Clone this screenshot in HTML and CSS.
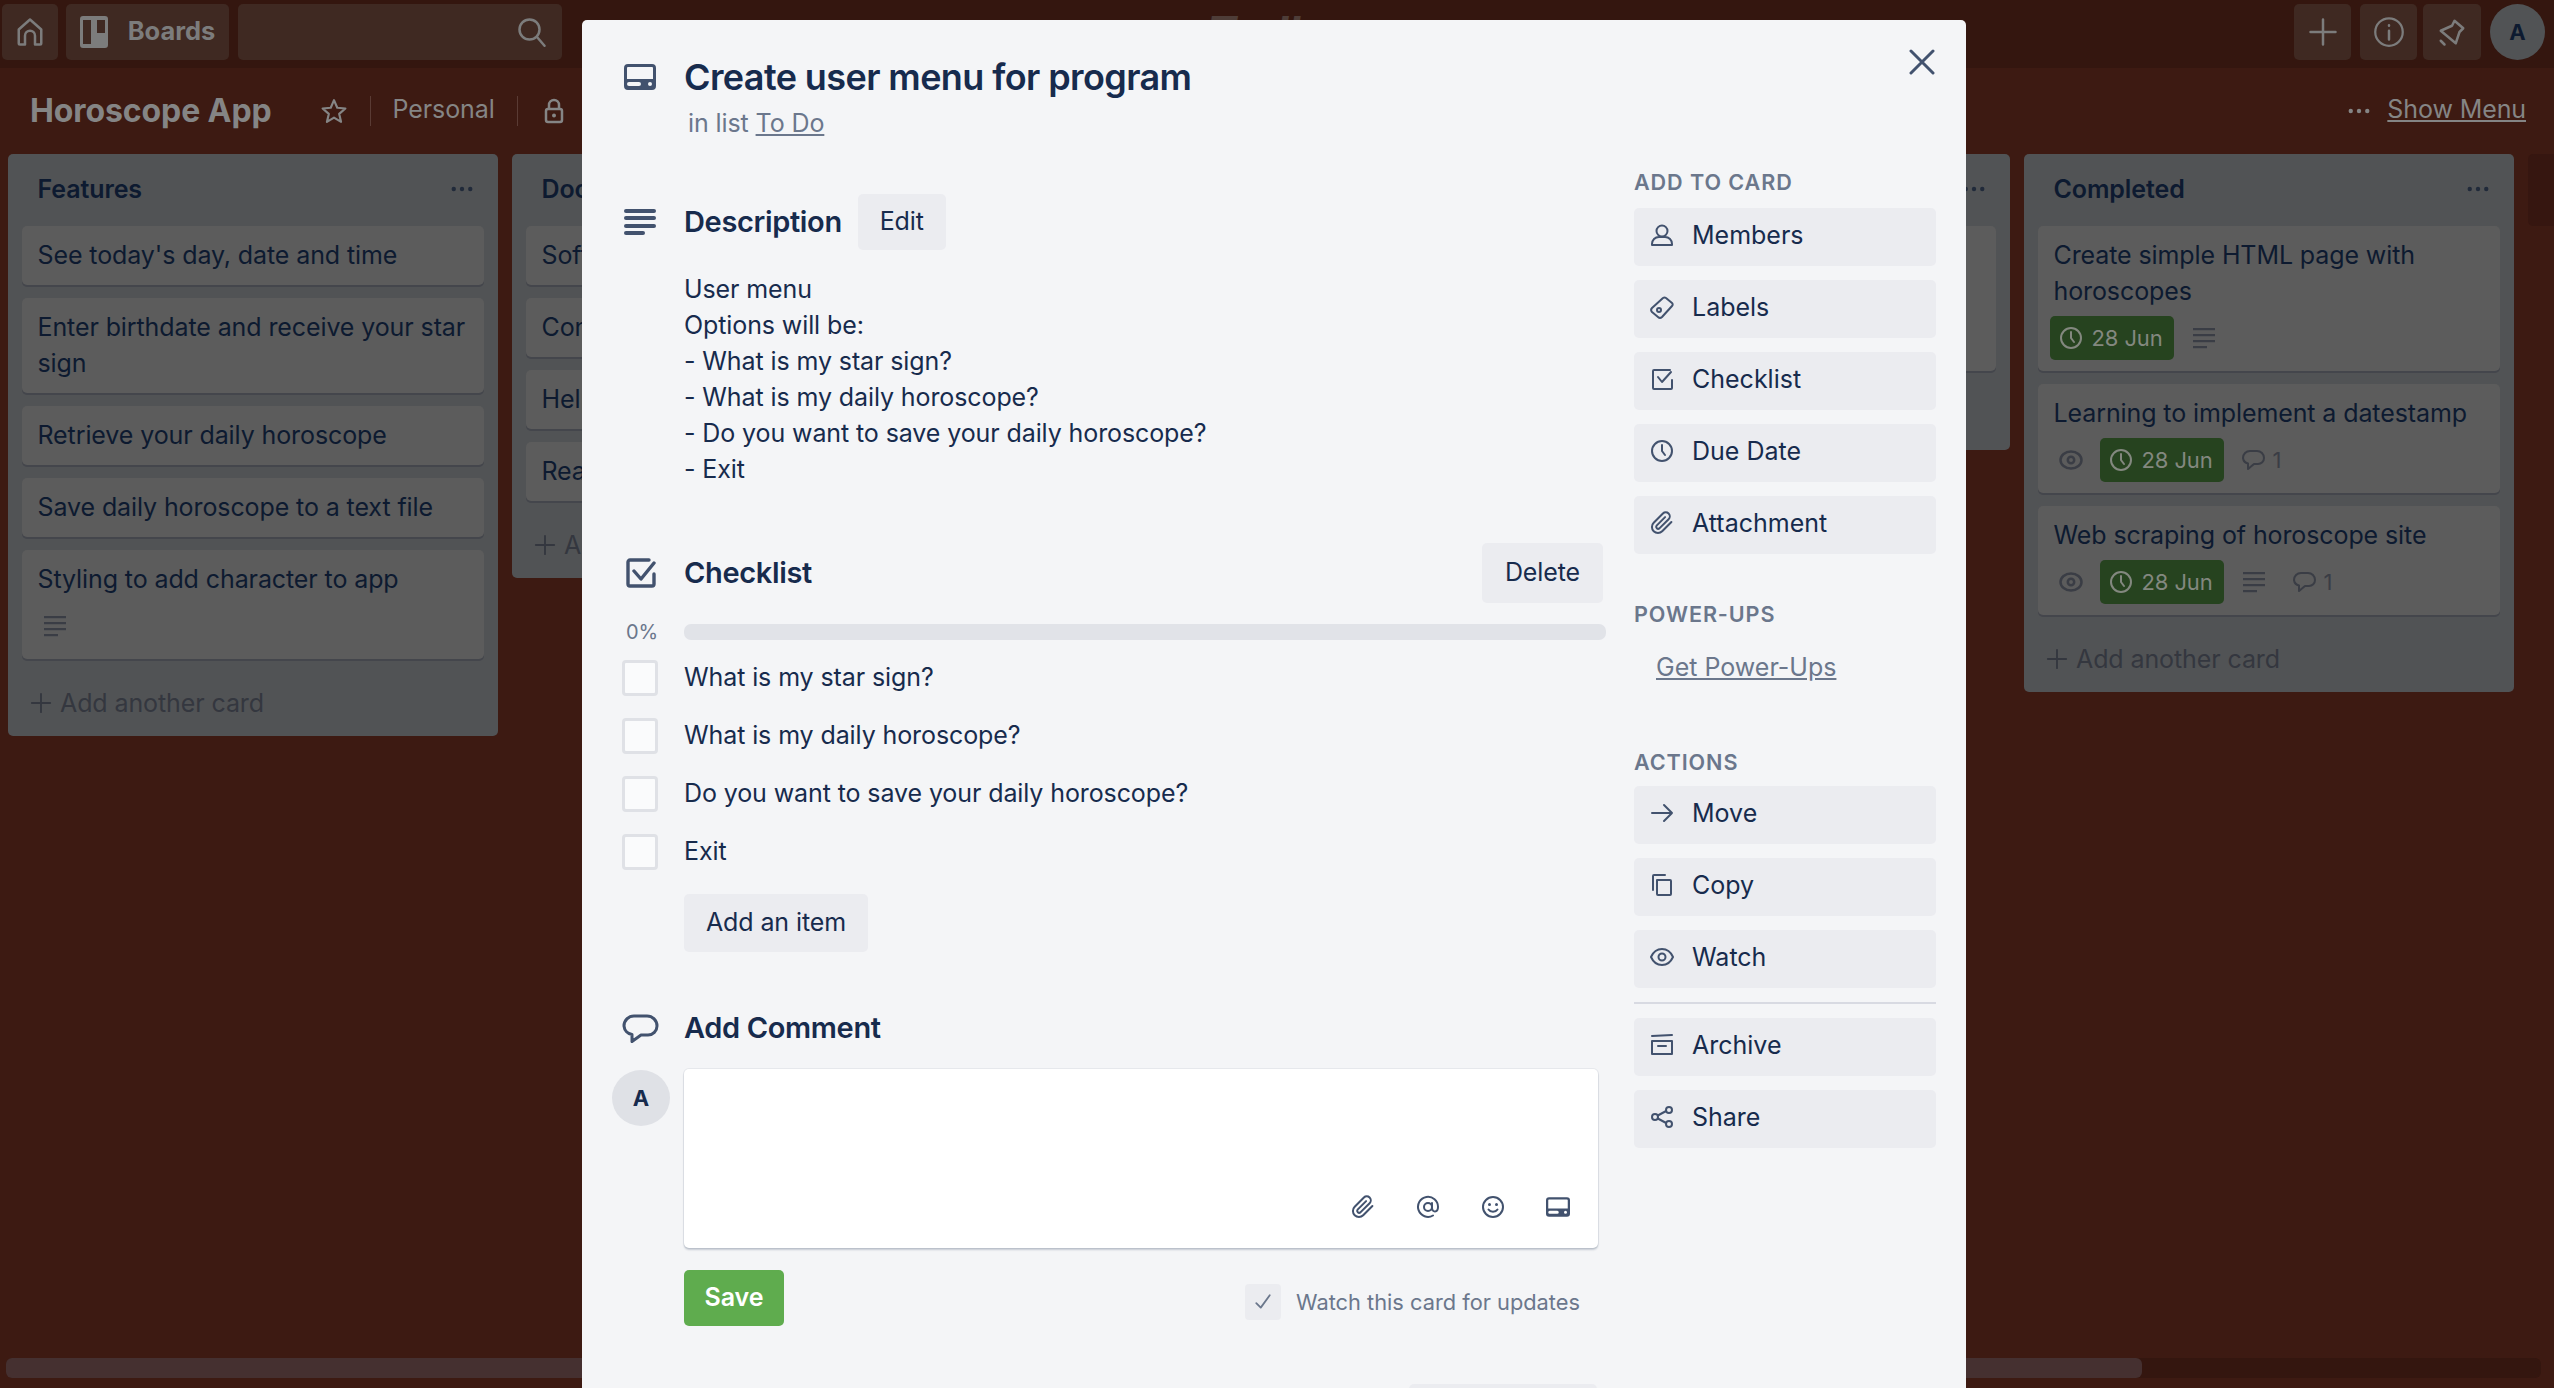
FILE: index.html
```html
<!DOCTYPE html>
<html lang="en">
<head>
    <meta charset="utf-8">
    <title>Create user menu for program | Horoscope App</title>
    <link rel="stylesheet" href="styles.css">
</head>
<body>
    <svg class="sprite" xmlns="http://www.w3.org/2000/svg">
        <symbol id="i-card" viewBox="0 0 32 26"><path fill-rule="evenodd" d="M4 0h24a4 4 0 0 1 4 4v18a4 4 0 0 1-4 4H4a4 4 0 0 1-4-4V4a4 4 0 0 1 4-4zm0 3a1 1 0 0 0-1 1v11h26V4a1 1 0 0 0-1-1zm1 15a1.500 1.500 0 0 0 0 4h10a1.500 1.500 0 0 0 0-4zm21 0a2 2 0 1 0 0 4 2 2 0 0 0 0-4z"/></symbol>
        <symbol id="i-desc" viewBox="0 0 32 26"><rect y="0" width="32" height="4" rx="2"/><rect y="7" width="32" height="4" rx="2"/><rect y="15" width="32" height="4" rx="2"/><rect y="22" width="21" height="4" rx="2"/></symbol>
        <symbol id="i-check" viewBox="0 0 30 30"><path fill="none" stroke="currentColor" stroke-width="3.400" stroke-linecap="round" stroke-linejoin="round" d="M23 2H4a2 2 0 0 0-2 2v22a2 2 0 0 0 2 2h22a2 2 0 0 0 2-2V16"/><path fill="none" stroke="currentColor" stroke-width="3.400" stroke-linecap="round" stroke-linejoin="round" d="M8 13l7 8L28 5"/></symbol>
        <symbol id="i-bubble" viewBox="0 0 24 24"><path fill="none" stroke="currentColor" stroke-width="2" stroke-linejoin="round" d="M9 3h7a7 7 0 0 1 7 7 6 6 0 0 1-6 6h-4l-6 5v-5.500A6.500 6.500 0 0 1 2 10a7 7 0 0 1 7-7z"/></symbol>
        <symbol id="i-bubble-wide" viewBox="0 0 37 29"><path fill="none" stroke="currentColor" stroke-width="3" stroke-linejoin="round" d="M12 2h13a10 10 0 0 1 10 10 9 9 0 0 1-9 9h-7l-9 6.500V20.500A9.500 9.500 0 0 1 2 12 10 10 0 0 1 12 2z"/></symbol>
        <symbol id="i-clock" viewBox="0 0 24 24"><circle cx="12" cy="12" r="10" fill="none" stroke="currentColor" stroke-width="2"/><path fill="none" stroke="currentColor" stroke-width="2" stroke-linecap="round" d="M12 6v6l3 4"/></symbol>
        <symbol id="i-eye" viewBox="0 0 24 24"><path fill="none" stroke="currentColor" stroke-width="2" d="M12 4c5 0 9 3.500 11 8-2 4.500-6 8-11 8S3 16.500 1 12c2-4.500 6-8 11-8z"/><circle cx="12" cy="12" r="3.500" fill="none" stroke="currentColor" stroke-width="2"/></symbol>
        <symbol id="i-eye-oval" viewBox="0 0 24 24"><ellipse cx="12" cy="12" rx="10.500" ry="8.500" fill="none" stroke="currentColor" stroke-width="2.500"/><circle cx="12" cy="12" r="3.200" fill="none" stroke="currentColor" stroke-width="2.500"/></symbol>
        <symbol id="i-lines" viewBox="0 0 24 24"><rect x="1" y="2" width="22" height="2.200"/><rect x="1" y="8" width="22" height="2.200"/><rect x="1" y="14" width="22" height="2.200"/><rect x="1" y="20" width="14" height="2.200"/></symbol>
        <symbol id="i-member" viewBox="0 0 24 24"><circle cx="12" cy="8" r="5.500" fill="none" stroke="currentColor" stroke-width="2"/><path fill="none" stroke="currentColor" stroke-width="2" stroke-linejoin="round" d="M2 22v-1c0-4 3-7 7-7h6c4 0 7 3 7 7v1z"/></symbol>
        <symbol id="i-label" viewBox="0 0 24 24"><path fill="none" stroke="currentColor" stroke-width="2" stroke-linejoin="round" d="M2 13L13 3a3 3 0 0 1 3 0l6 5a2 2 0 0 1 0 3L12 22a3 3 0 0 1-4 0l-6-5a3 3 0 0 1 0-4z"/><circle cx="9" cy="15" r="2" fill="none" stroke="currentColor" stroke-width="2"/></symbol>
        <symbol id="i-checksmall" viewBox="0 0 24 24"><path fill="none" stroke="currentColor" stroke-width="2" stroke-linecap="round" stroke-linejoin="round" d="M20 3H4a1 1 0 0 0-1 1v17a1 1 0 0 0 1 1h17a1 1 0 0 0 1-1V13"/><path fill="none" stroke="currentColor" stroke-width="2" stroke-linecap="round" stroke-linejoin="round" d="M8 10l4 5 9-10"/></symbol>
        <symbol id="i-clip" viewBox="0 0 24 24"><path fill="none" stroke="currentColor" stroke-width="2" stroke-linecap="round" stroke-linejoin="round" d="M21.400 11l-9.200 9.200a6 6 0 0 1-8.500-8.500l9.200-9.200a4 4 0 0 1 5.700 5.700l-9.200 9.200a2 2 0 0 1-2.800-2.800l8.500-8.500"/></symbol>
        <symbol id="i-arrow" viewBox="0 0 24 24"><path fill="none" stroke="currentColor" stroke-width="2" stroke-linecap="round" stroke-linejoin="round" d="M2 12h20M14 4l8 8-8 8"/></symbol>
        <symbol id="i-copy" viewBox="0 0 24 24"><path fill="none" stroke="currentColor" stroke-width="2" stroke-linecap="round" stroke-linejoin="round" d="M7 7h13a1 1 0 0 1 1 1v13a1 1 0 0 1-1 1H8a1 1 0 0 1-1-1zM3 17V3a1 1 0 0 1 1-1h11"/></symbol>
        <symbol id="i-archive" viewBox="0 0 24 24"><path fill="none" stroke="currentColor" stroke-width="2" stroke-linecap="round" stroke-linejoin="round" d="M2 3l20-1M2 8h20v13H2zM8 13h8"/></symbol>
        <symbol id="i-share" viewBox="0 0 24 24"><path fill="none" stroke="currentColor" stroke-width="2" d="M5 12l13-7M5 12l13 7"/><circle cx="5" cy="12" r="3" fill="#ebecf0" stroke="currentColor" stroke-width="2"/><circle cx="19" cy="5" r="3" fill="#ebecf0" stroke="currentColor" stroke-width="2"/><circle cx="19" cy="19" r="3" fill="#ebecf0" stroke="currentColor" stroke-width="2"/></symbol>
        <symbol id="i-plus" viewBox="0 0 24 24"><path fill="none" stroke="currentColor" stroke-width="2" stroke-linecap="round" d="M12 2v20M2 12h20"/></symbol>
        <symbol id="i-dots" viewBox="0 0 24 6"><circle cx="3" cy="3" r="2.400"/><circle cx="12" cy="3" r="2.400"/><circle cx="21" cy="3" r="2.400"/></symbol>
        <symbol id="i-smile" viewBox="0 0 24 24"><circle cx="12" cy="12" r="10" fill="none" stroke="currentColor" stroke-width="2"/><circle cx="8.500" cy="9.500" r="1.500"/><circle cx="15.500" cy="9.500" r="1.500"/><path fill="none" stroke="currentColor" stroke-width="2" stroke-linecap="round" d="M7.500 14.500c2 3 7 3 9 0"/></symbol>
        <symbol id="i-at" viewBox="0 0 24 24"><path fill="none" stroke="currentColor" stroke-width="2" stroke-linecap="round" d="M17 20.500A10 10 0 1 1 22 12c0 6-6 5.500-6 1V8m0 4a4 4 0 1 1-8 0 4 4 0 0 1 8 0z"/></symbol>
    </svg>

    <div class="page">
        <header class="topbar">
            <a class="top-btn top-home">
                <svg class="top-icon" viewBox="0 0 24 24"><path fill="none" stroke="currentColor" stroke-width="2" stroke-linejoin="round" d="M3 10l9-8 9 8v11a1 1 0 0 1-1 1h-4v-7a4 4 0 0 0-8 0v7H4a1 1 0 0 1-1-1z"/></svg>
            </a>
            <a class="top-btn top-boards">
                <svg class="boards-icon" viewBox="0 0 28 32"><path fill-rule="evenodd" d="M3 0h22a3 3 0 0 1 3 3v26a3 3 0 0 1-3 3H3a3 3 0 0 1-3-3V3a3 3 0 0 1 3-3zm0 4v24h8V4zm14 0v13h8V4z"/></svg>
                <span>Boards</span>
            </a>
            <div class="top-btn top-search">
                <svg class="top-icon" viewBox="0 0 24 24"><circle cx="10" cy="10" r="8" fill="none" stroke="currentColor" stroke-width="2"/><path fill="none" stroke="currentColor" stroke-width="2" stroke-linecap="round" d="M16 16l6 7"/></svg>
            </div>
            <div class="top-logo">Trello</div>
            <a class="top-btn top-square"><svg class="top-icon"><use href="#i-plus"/></svg></a>
            <a class="top-btn top-square top-info"><svg class="top-icon" viewBox="0 0 24 24"><circle cx="12" cy="12" r="11" fill="none" stroke="currentColor" stroke-width="1.800"/><path fill="none" stroke="currentColor" stroke-width="2" stroke-linecap="round" d="M12 11v7M12 6.500v.5"/></svg></a>
            <a class="top-btn top-square top-bell"><svg class="top-icon" viewBox="0 0 24 24"><path fill="none" stroke="currentColor" stroke-width="2" stroke-linejoin="round" d="M14 3l7 6-3 3-3 9-12-10 9-4z"/><path fill="none" stroke="currentColor" stroke-width="2" stroke-linecap="round" d="M3 19l3 3"/></svg></a>
            <div class="top-avatar">A</div>
        </header>

        <div class="boardbar">
            <h1 class="board-title">Horoscope App</h1>
            <svg class="star" viewBox="0 0 24 24"><path fill="none" stroke="currentColor" stroke-width="2" stroke-linejoin="round" d="M12 2l3 7 7.500.7-5.700 5 1.700 7.300-6.500-3.900L5.500 22l1.700-7.300-5.700-5L9 9z"/></svg>
            <span class="bar-sep"></span>
            <span class="bar-text">Personal</span>
            <span class="bar-sep"></span>
            <svg class="lock" viewBox="0 0 20 26"><path fill="none" stroke="currentColor" stroke-width="2.500" d="M5 11V7a5 5 0 0 1 10 0v4"/><rect x="2" y="11" width="16" height="13" rx="2" fill="none" stroke="currentColor" stroke-width="2.500"/><circle cx="10" cy="17.500" r="2"/></svg>
            <div class="bar-right">
                <svg class="bar-dots"><use href="#i-dots"/></svg>
                <a class="show-menu">Show Menu</a>
            </div>
        </div>

        <main class="lists">
            <section class="list">
                <div class="list-head"><h2>Features</h2><svg class="list-dots"><use href="#i-dots"/></svg></div>
                <div class="card">See today's day, date and time</div>
                <div class="card">Enter birthdate and receive your star sign</div>
                <div class="card">Retrieve your daily horoscope</div>
                <div class="card">Save daily horoscope to a text file</div>
                <div class="card">Styling to add character to app
                    <div class="badges"><svg class="badge-lines"><use href="#i-lines"/></svg></div>
                </div>
                <div class="add-card"><svg class="add-plus"><use href="#i-plus"/></svg>Add another card</div>
            </section>

            <section class="list">
                <div class="list-head"><h2>Documentation</h2></div>
                <div class="card">Software</div>
                <div class="card">Content</div>
                <div class="card">Help</div>
                <div class="card">Readme</div>
                <div class="add-card"><svg class="add-plus"><use href="#i-plus"/></svg>Add another card</div>
            </section>

            <section class="list list-hidden"></section>

            <section class="list list-todo">
                <div class="list-head"><h2>To Do</h2><svg class="list-dots"><use href="#i-dots"/></svg></div>
                <div class="card card-todo">Create user menu for program</div>
            </section>

            <section class="list">
                <div class="list-head"><h2>Completed</h2><svg class="list-dots"><use href="#i-dots"/></svg></div>
                <div class="card">Create simple HTML page with horoscopes
                    <div class="badges">
                        <span class="due"><svg class="due-icon"><use href="#i-clock"/></svg>28 Jun</span>
                        <svg class="badge-lines"><use href="#i-lines"/></svg>
                    </div>
                </div>
                <div class="card">Learning to implement a datestamp
                    <div class="badges">
                        <svg class="badge-eye"><use href="#i-eye-oval"/></svg>
                        <span class="due"><svg class="due-icon"><use href="#i-clock"/></svg>28 Jun</span>
                        <span class="badge-count"><svg class="badge-icon"><use href="#i-bubble"/></svg>1</span>
                    </div>
                </div>
                <div class="card">Web scraping of horoscope site
                    <div class="badges">
                        <svg class="badge-eye"><use href="#i-eye-oval"/></svg>
                        <span class="due"><svg class="due-icon"><use href="#i-clock"/></svg>28 Jun</span>
                        <svg class="badge-lines"><use href="#i-lines"/></svg>
                        <span class="badge-count"><svg class="badge-icon"><use href="#i-bubble"/></svg>1</span>
                    </div>
                </div>
                <div class="add-card"><svg class="add-plus"><use href="#i-plus"/></svg>Add another card</div>
            </section>

            <div class="add-list"></div>
        </main>

        <div class="scrollbar"><div class="scroll-thumb"></div></div>
    </div>

    <div class="modal">
        <svg class="close" viewBox="0 0 26 26"><path fill="none" stroke="currentColor" stroke-width="3" stroke-linecap="round" d="M2 2l22 22M24 2L2 24"/></svg>

        <div class="modal-main">
            <div class="title-row">
                <svg class="sec-icon icon-card"><use href="#i-card"/></svg>
                <h2 class="card-title">Create user menu for program</h2>
            </div>
            <p class="in-list">in list <a>To Do</a></p>

            <div class="sec-head desc-head">
                <svg class="sec-icon icon-desc"><use href="#i-desc"/></svg>
                <h3>Description</h3>
                <a class="btn">Edit</a>
            </div>
            <div class="desc-text">
                <div>User menu</div>
                <div>Options will be:</div>
                <div>- What is my star sign?</div>
                <div>- What is my daily horoscope?</div>
                <div>- Do you want to save your daily horoscope?</div>
                <div>- Exit</div>
            </div>

            <div class="sec-head check-head">
                <svg class="sec-icon icon-check"><use href="#i-check"/></svg>
                <h3>Checklist</h3>
                <a class="btn btn-delete">Delete</a>
            </div>
            <div class="progress">
                <span class="percent">0%</span>
                <div class="bar"></div>
            </div>
            <ul class="items">
                <li><span class="box"></span>What is my star sign?</li>
                <li><span class="box"></span>What is my daily horoscope?</li>
                <li><span class="box"></span>Do you want to save your daily horoscope?</li>
                <li><span class="box"></span>Exit</li>
            </ul>
            <a class="btn btn-add">Add an item</a>

            <div class="sec-head comment-head">
                <svg class="sec-icon icon-bubble"><use href="#i-bubble-wide"/></svg>
                <h3>Add Comment</h3>
            </div>
            <div class="comment-row">
                <div class="avatar">A</div>
                <div class="comment-box">
                    <svg class="tool"><use href="#i-clip"/></svg>
                    <svg class="tool"><use href="#i-at"/></svg>
                    <svg class="tool"><use href="#i-smile"/></svg>
                    <svg class="tool"><use href="#i-card"/></svg>
                </div>
            </div>
            <div class="save-row">
                <a class="btn-save">Save</a>
                <label class="watch">
                    <span class="watch-box"><svg viewBox="0 0 16 16"><path fill="none" stroke="currentColor" stroke-width="1.600" stroke-linecap="round" stroke-linejoin="round" d="M2 9l4 4 8-11"/></svg></span>
                    Watch this card for updates
                </label>
            </div>
            <div class="details-row"><a class="btn btn-details"></a></div>
        </div>

        <aside class="sidebar">
            <h4>Add to card</h4>
            <a class="side-btn first"><svg><use href="#i-member"/></svg>Members</a>
            <a class="side-btn"><svg><use href="#i-label"/></svg>Labels</a>
            <a class="side-btn"><svg><use href="#i-checksmall"/></svg>Checklist</a>
            <a class="side-btn"><svg><use href="#i-clock"/></svg>Due Date</a>
            <a class="side-btn"><svg><use href="#i-clip"/></svg>Attachment</a>

            <h4 class="h-power">Power-Ups</h4>
            <a class="get-power">Get Power-Ups</a>

            <h4 class="h-actions">Actions</h4>
            <a class="side-btn first-action"><svg><use href="#i-arrow"/></svg>Move</a>
            <a class="side-btn"><svg><use href="#i-copy"/></svg>Copy</a>
            <a class="side-btn"><svg><use href="#i-eye"/></svg>Watch</a>
            <hr class="side-sep">
            <a class="side-btn"><svg><use href="#i-archive"/></svg>Archive</a>
            <a class="side-btn"><svg><use href="#i-share"/></svg>Share</a>
        </aside>
    </div>
</body>
</html>
```

FILE: styles.css
```css
* {
    box-sizing: border-box;
}

html, body {
    height: 100%;
    margin: 0;
    overflow: hidden;
}

body {
    background-color: #3d1a12;
    color: #172b4d;
    font-family: "Inter", "Liberation Sans", sans-serif;
    font-size: 25px;
    line-height: 36px;
    letter-spacing: -0.1px;
}

h1, h2, h3, h4, p, ul {
    margin: 0;
    padding: 0;
}

svg {
    fill: currentColor;
    flex-shrink: 0;
}

.sprite {
    display: none;
}

.page {
    display: flex;
    flex-direction: column;
    height: 1388px;
}

/* top bar */
.topbar {
    display: flex;
    align-items: center;
    height: 68px;
    flex-shrink: 0;
    padding: 0 9px 4px 2px;
    background-color: #34160f;
    color: #7c7c7c;
}

.top-btn {
    display: flex;
    align-items: center;
    justify-content: center;
    height: 56px;
    background-color: #3f2922;
    border-radius: 5px;
}

.top-home {
    width: 56px;
}

.top-boards {
    width: 163px;
    margin-left: 8px;
    gap: 20px;
    font-weight: 700;
}

.top-boards span {
    margin-top: -3px;
    font-size: 25.500px;
    letter-spacing: 0;
}

.top-search {
    width: 324px;
    margin-left: 9px;
    justify-content: flex-end;
    padding-right: 15px;
}

.top-icon {
    width: 30px;
    height: 30px;
}

.boards-icon {
    width: 28px;
    height: 32px;
}

/* only the top of the logo shows above the card window */
.top-logo {
    flex: 1;
    padding-left: 645px;
    color: #4e3d38;
    font-size: 44px;
    font-style: italic;
    font-weight: 700;
    line-height: 44px;
}

.top-square {
    width: 57px;
    margin-right: 9px;
}

.top-info {
    margin-right: 6px;
}

.top-bell {
    width: 58px;
    margin-right: 9px;
}

.top-avatar {
    display: flex;
    align-items: center;
    justify-content: center;
    width: 55px;
    height: 56px;
    border-radius: 50%;
    background-color: #515355;
    color: #0d1a30;
    font-size: 22px;
    font-weight: 700;
}

/* board header */
.boardbar {
    display: flex;
    align-items: center;
    height: 86px;
    flex-shrink: 0;
    padding: 0 28px 0 30px;
    color: #858585;
}

.board-title {
    font-size: 32px;
    font-weight: 700;
    line-height: 40px;
}

.star {
    width: 26px;
    height: 26px;
    margin-left: 49px;
}

.bar-sep {
    width: 1px;
    height: 30px;
    background-color: #5a3b34;
    margin: 0 22px 0 23px;
}

.bar-text {
    width: 101px;
    margin-top: -4px;
}

.lock {
    width: 20px;
    height: 28px;
    margin-left: 4px;
}

.bar-right {
    display: flex;
    align-items: center;
    margin-left: auto;
}

.bar-dots {
    width: 22px;
    height: 6px;
    margin-right: 17px;
}

.show-menu {
    text-decoration: underline;
    margin-top: -4px;
}

/* lists */
.lists {
    display: flex;
    align-items: flex-start;
    gap: 14px;
    flex: 1;
    padding-left: 8px;
}

.list {
    width: 490px;
    flex-shrink: 0;
    padding: 0 14px;
    background-color: #515355;
    border-radius: 5px;
    color: #0d1a30;
}

.list-hidden,
.list-todo {
    height: 296px;
}

.list-head {
    display: flex;
    align-items: center;
    justify-content: space-between;
    height: 72px;
    padding: 0 11px 2px 15.500px;
}

.list-head h2 {
    font-size: 25px;
    font-weight: 600;
}

.list-dots {
    width: 22px;
    height: 6px;
    opacity: 0.7;
}

.card {
    margin-bottom: 13px;
    padding: 11px 8px 12px 15.500px;
    background-color: #5c5c5c;
    border-radius: 5px;
    box-shadow: 0 2px 0 #44464c;
}

.card-todo {
    min-height: 145px;
}

.badges {
    display: flex;
    align-items: center;
    height: 44px;
    margin: 7px 0 -1px -4px;
    color: #3a3d45;
}

.badge-icon {
    width: 24px;
    height: 24px;
}

.badge-eye {
    width: 24px;
    height: 24px;
    margin: 0 17px 0 9px;
}

.badge-lines {
    width: 24px;
    height: 24px;
    margin: 0 18px 0 9px;
}

.badge-count {
    display: flex;
    align-items: center;
    gap: 8px;
    margin-left: 8px;
    font-size: 22px;
}

.due {
    display: flex;
    align-items: center;
    gap: 9px;
    width: 124px;
    height: 44px;
    margin-right: 9px;
    padding-left: 9px;
    background-color: #26431f;
    border-radius: 5px;
    color: #83887f;
    font-size: 22px;
}

.due-icon {
    width: 24px;
    height: 24px;
}

.add-card {
    display: flex;
    align-items: center;
    gap: 8px;
    height: 66px;
    margin-top: -2px;
    padding-left: 8px;
    color: #34373f;
}

.add-plus {
    width: 22px;
    height: 22px;
}

.add-list {
    width: 60px;
    height: 72px;
    flex-shrink: 0;
    background-color: #361610;
    border-radius: 5px;
}

/* bottom scrollbar */
.scrollbar {
    height: 20px;
    flex-shrink: 0;
    margin: 0 13px 10px 6px;
    background-color: #34160f;
    border-radius: 6px;
}

.scroll-thumb {
    width: 2136px;
    height: 20px;
    background-color: #453030;
    border-radius: 6px;
}

/* card window */
.modal {
    position: absolute;
    top: 20px;
    left: 582px;
    display: flex;
    justify-content: space-between;
    width: 1384px;
    height: 1368px;
    padding: 35px 30px 0 40px;
    overflow: hidden;
    background-color: #f4f5f7;
    border-radius: 5px 5px 0 0;
}

.close {
    position: absolute;
    top: 29px;
    right: 31px;
    width: 26px;
    height: 26px;
    color: #42526e;
}

.modal-main {
    width: 984px;
}

.sec-icon {
    color: #42526e;
    width: 32px;
    margin-right: 30px;
}

.title-row {
    display: flex;
    align-items: center;
    height: 44px;
}

.icon-card {
    height: 26px;
    margin-left: 2px;
    margin-right: 28px;
}

.card-title {
    font-size: 36px;
    line-height: 44px;
    font-weight: 600;
    letter-spacing: -0.6px;
}

.in-list {
    margin: 6px 0 0 66px;
    color: #6b778c;
}

.in-list a {
    text-decoration: underline;
}

.sec-head {
    display: flex;
    align-items: center;
}

.sec-head h3 {
    font-size: 29px;
    font-weight: 600;
    letter-spacing: -0.35px;
}

.desc-head {
    height: 56px;
    margin-top: 53px;
}

.icon-desc {
    height: 26px;
    margin-left: 2px;
    margin-right: 28px;
}

.btn {
    display: flex;
    align-items: center;
    justify-content: center;
    height: 56px;
    padding-bottom: 2px;
    background-color: #ebecf0;
    border-radius: 5px;
}

.desc-head .btn {
    width: 88px;
    margin-left: 16px;
}

.desc-text {
    margin: 21px 0 0 62px;
}

.check-head {
    height: 58px;
    margin-top: 57px;
}

.icon-check {
    width: 30px;
    height: 30px;
    margin-left: 4px;
    margin-right: 28px;
}

.btn-delete {
    width: 121px;
    height: 60px;
    margin-left: auto;
    margin-right: 3px;
}

.progress {
    display: flex;
    align-items: center;
    height: 16px;
    margin-top: 22px;
}

.percent {
    width: 62px;
    padding-left: 4px;
    color: #6b778c;
    font-size: 20px;
    line-height: 20px;
}

.bar {
    flex: 1;
    height: 16px;
    background-color: #e1e3e8;
    border-radius: 7px;
}

.items {
    display: flex;
    flex-direction: column;
    gap: 22px;
    margin-top: 20px;
    list-style: none;
}

.items li {
    display: flex;
    align-items: flex-start;
    height: 36px;
    line-height: 34px;
}

.box {
    width: 36px;
    height: 36px;
    margin-right: 26px;
    background-color: #fafbfc;
    border: 3px solid #dfe1e6;
    border-radius: 4px;
}

.btn-add {
    width: 184px;
    height: 58px;
    margin: 24px 0 0 62px;
}

.comment-head {
    height: 40px;
    margin-top: 56px;
}

.icon-bubble {
    width: 37px;
    height: 29px;
    margin-left: 0;
    margin-right: 25px;
}

.comment-row {
    display: flex;
    margin: 21px 8px 0 -10px;
}

.avatar {
    display: flex;
    align-items: center;
    justify-content: center;
    width: 58px;
    height: 56px;
    margin: 1px 14px 0 0;
    border-radius: 50%;
    background-color: #dfe1e6;
    color: #172b4d;
    font-size: 22px;
    font-weight: 700;
}

.comment-box {
    display: flex;
    align-items: flex-end;
    justify-content: flex-end;
    gap: 41px;
    flex: 1;
    height: 179px;
    padding: 0 28px 29px 0;
    background-color: #fff;
    border-radius: 5px;
    box-shadow: 0 2px 2px rgba(9, 30, 66, 0.2), 0 0 0 1px rgba(9, 30, 66, 0.06);
}

.tool {
    width: 24px;
    height: 24px;
    color: #42526e;
}

.save-row {
    display: flex;
    align-items: flex-start;
    justify-content: space-between;
    margin: 22px 26px 0 62px;
}

.btn-save {
    display: flex;
    align-items: center;
    justify-content: center;
    width: 100px;
    height: 56px;
    padding-bottom: 3px;
    background-color: #5fac4e;
    border-radius: 5px;
    color: #fff;
    font-weight: 600;
}

.watch {
    display: flex;
    align-items: center;
    gap: 15px;
    margin-top: 14px;
    color: #6b778c;
    font-size: 21.800px;
    letter-spacing: 0;
}

.watch-box {
    display: flex;
    align-items: center;
    justify-content: center;
    width: 36px;
    height: 36px;
    background-color: #ebecf0;
    border-radius: 4px;
}

.watch-box svg {
    width: 18px;
    height: 18px;
}

.details-row {
    display: flex;
    justify-content: flex-end;
    margin: 58px 9px 0 0;
}

.btn-details {
    width: 188px;
    height: 58px;
}

/* right column */
.sidebar {
    width: 302px;
    padding-top: 111px;
    letter-spacing: 0;
}

.sidebar h4 {
    color: #6b778c;
    font-size: 21.600px;
    font-weight: 600;
    line-height: 32px;
    letter-spacing: 0.9px;
    text-transform: uppercase;
}

.side-btn {
    display: flex;
    align-items: center;
    height: 58px;
    margin-top: 14px;
    padding: 0 0 4px 16px;
    background-color: #ebecf0;
    border-radius: 5px;
}

.side-btn svg {
    width: 24px;
    height: 24px;
    margin-right: 18px;
    color: #42526e;
}

.side-btn.first {
    margin-top: 10px;
}

.side-btn.first-action {
    margin-top: 8px;
}

.h-power {
    margin-top: 44px;
}

.get-power {
    display: block;
    margin: 19px 0 0 22px;
    color: #6b778c;
    text-decoration: underline;
}

.h-actions {
    margin-top: 61px;
}

.side-sep {
    height: 2px;
    margin: 14px 0 0;
    border: 0;
    background-color: #d8dae2;
}
```
